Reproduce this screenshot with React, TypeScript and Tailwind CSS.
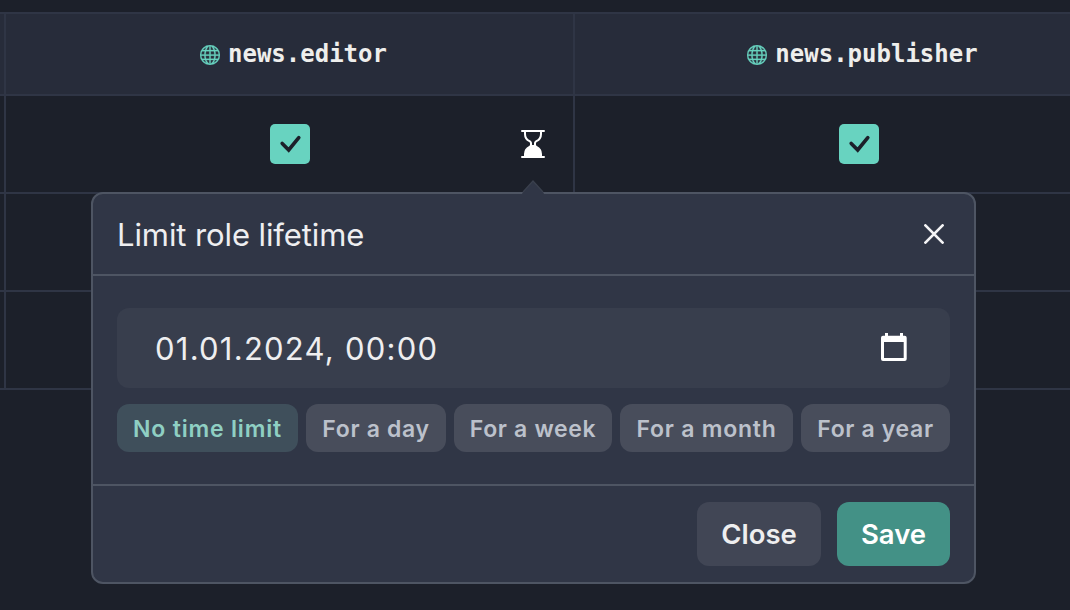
import React from "react";
import { BsGlobe, BsHourglassBottom } from "react-icons/bs";

const PRESETS = [
  { label: "No time limit", className: "w-[181px] bg-[#3f4f5b] text-[#8fcfc3] tracking-[0.8px]" },
  { label: "For a day", className: "w-[140px] bg-[#484d5b] text-[#bcc1cb] tracking-[0.65px]" },
  { label: "For a week", className: "w-[158px] bg-[#484d5b] text-[#bcc1cb] tracking-[0.65px]" },
  { label: "For a month", className: "w-[173px] bg-[#484d5b] text-[#bcc1cb] tracking-[0.75px]" },
  { label: "For a year", className: "w-[149px] bg-[#484d5b] text-[#bcc1cb] tracking-[0.65px]" },
];

function RoleHeader({ name }: { name: string }) {
  return (
    <div className="flex w-[569px] shrink-0 items-center justify-center border-r-2 border-[#2f3545] pl-2">
      <BsGlobe className="mr-2 mt-[2px] size-5 stroke-[#68d3c0] stroke-[0.25] text-[#68d3c0]" />
      <span className="font-['DejaVu_Sans_Mono',monospace] text-2xl font-bold text-[#eeeeec]">{name}</span>
    </div>
  );
}

function CheckBox() {
  return (
    <div className="flex size-10 items-center justify-center rounded-[5px] bg-[#68d3c0]">
      <svg width="24" height="20" viewBox="0 0 24 20" fill="none" stroke="#1c202a" strokeWidth="3.6" strokeLinecap="round">
        <path d="M4.2 9.4 L10.7 16 L20.8 3.7" />
      </svg>
    </div>
  );
}

function RoleCell({ children }: { children?: React.ReactNode }) {
  return <div className="relative flex w-[569px] shrink-0 items-center justify-center border-r-2 border-[#2f3545] pl-[1px]">{children}</div>;
}

function LimitPopover() {
  return (
    <div className="absolute left-[91px] top-[192px] w-[885px] rounded-xl border-2 border-[#4e5563] bg-[#303646]">
      <svg className="absolute -top-[14px] left-[428px]" width="24" height="14" viewBox="0 0 24 14">
        <path d="M1 14 L2 12 L12 1 L22 12 L23 14 Z" fill="#303646" />
        <path d="M2 12 L12 1 L22 12" fill="none" stroke="#3a404d" strokeWidth="1.2" />
      </svg>
      <header className="flex h-[82px] items-center justify-between border-b-2 border-[#4e5563] pl-6 pr-[30px]">
        <h2 className="text-[31px] leading-none tracking-[-0.1px] text-[#eeeef0]">Limit role lifetime</h2>
        <button aria-label="Close">
          <svg width="20" height="20" viewBox="0 0 20 20" stroke="#f4f4f6" strokeWidth="2.7" strokeLinecap="round">
            <path d="M1.4 1.4 L18.6 18.6 M18.6 1.4 L1.4 18.6" />
          </svg>
        </button>
      </header>
      <div className="h-[210px] border-b-2 border-[#4e5563] px-6 pt-8">
        <div className="flex h-20 items-center justify-between rounded-xl bg-[#383e4d] pl-[38px] pr-10">
          <span className="pt-[2px] text-[31px] tracking-[1.25px] text-[#eeeef0]">01.01.2024, 00:00</span>
          <svg width="32" height="32" viewBox="0 0 32 32" fill="#fff">
            <path
              fillRule="evenodd"
              d="M7 1h3v2.700h12V1h3v2.700h1.700a2 2 0 0 1 2 2V27a2 2 0 0 1-2 2H5a2 2 0 0 1-2-2V5.700a2 2 0 0 1 2-2h2zM6 10v16h19.700V10z"
            />
          </svg>
        </div>
        <div className="mt-4 flex gap-2">
          {PRESETS.map(({ label, className }) => (
            <button key={label} className={`h-12 shrink-0 whitespace-nowrap rounded-xl pt-[2px] text-[23px] font-semibold ${className}`}>
              {label}
            </button>
          ))}
        </div>
      </div>
      <footer className="flex h-24 items-center justify-end gap-4 px-6">
        <button className="h-16 w-[124px] rounded-xl bg-[#414655] pt-[2px] text-[27.5px] font-semibold text-[#eeeeef]">Close</button>
        <button className="h-16 w-[113px] rounded-xl bg-[#439186] pt-[2px] text-[27.5px] font-semibold text-white">Save</button>
      </footer>
    </div>
  );
}

export default function App() {
  return (
    <div className="relative h-[610px] w-[1070px] overflow-hidden bg-[#1c202a] pt-3 font-['Inter',sans-serif]">
      <div className="flex h-[84px] border-y-2 border-[#2f3545] bg-[#272c3a]">
        <div className="w-1.5 shrink-0 border-r-2 border-[#2f3545]" />
        <RoleHeader name="news.editor" />
        <RoleHeader name="news.publisher" />
      </div>
      {[0, 1, 2].map((row) => (
        <div key={row} className="flex h-[98px] border-b-2 border-[#2f3545]">
          <div className="w-1.5 shrink-0 border-r-2 border-[#2f3545]" />
          <RoleCell>
            {row === 0 && (
              <>
                <CheckBox />
                <BsHourglassBottom className="absolute right-6 top-8 size-8 text-white" />
              </>
            )}
          </RoleCell>
          <RoleCell>{row === 0 && <CheckBox />}</RoleCell>
        </div>
      ))}
      <LimitPopover />
    </div>
  );
}
